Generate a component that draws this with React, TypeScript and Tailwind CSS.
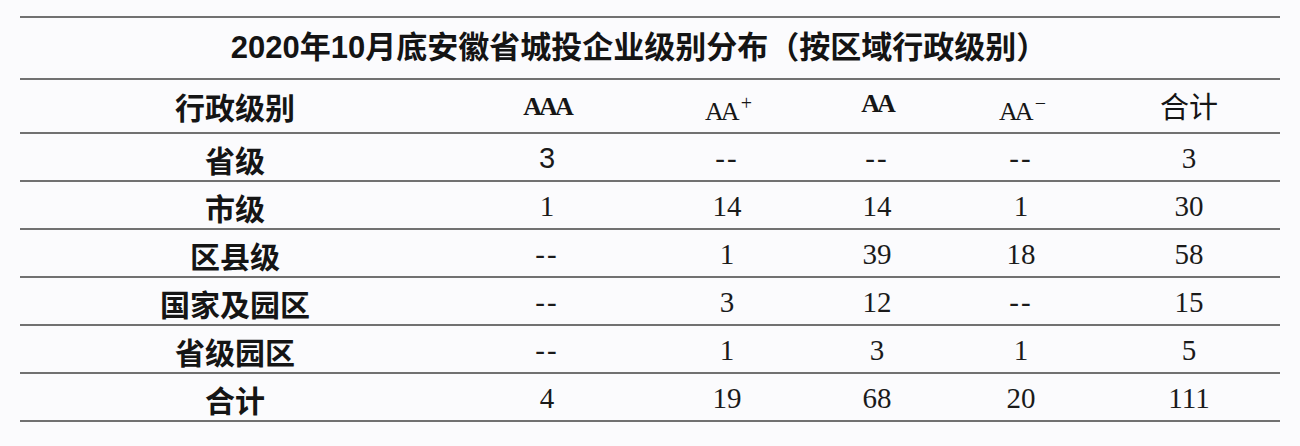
const cols = "grid grid-cols-[430px_194px_166px_134px_154px_182px] items-center";
const line = "border-b-2 border-[#717171]";

const cjk = "font-['Noto_Sans_CJK_SC',sans-serif]";
const serif = "font-['Liberation_Serif','Noto_Sans_CJK_SC',serif]";

const rows: string[][] = [
  ["省级", "3", "--", "--", "--", "3"],
  ["市级", "1", "14", "14", "1", "30"],
  ["区县级", "--", "1", "39", "18", "58"],
  ["国家及园区", "--", "3", "12", "--", "15"],
  ["省级园区", "--", "1", "3", "1", "5"],
  ["合计", "4", "19", "68", "20", "111"],
];

function Grade({ sup }: { sup: string }) {
  return (
    <span className={`${serif} text-[26px] tracking-[-3px] text-[#161616]`}>
      <span className="relative top-[5px]">AA</span>
      <span className="relative -top-[5px] ml-[4px] text-[20px]">{sup}</span>
    </span>
  );
}

export default function App() {
  return (
    <div className="min-h-screen bg-[#fbfbfd] px-5 pt-4">
      <div className="w-[1260px] border-t-2 border-[#717171]">
        <div className={`flex h-[62px] items-center justify-center pr-[22px] ${line}`}>
          <h1 className="font-['Liberation_Sans','Noto_Sans_CJK_SC',sans-serif] text-[31px] font-bold text-[#141414]">
            2020年10月底安徽省城投企业级别分布（按区域行政级别）
          </h1>
        </div>

        <div className={`${cols} h-[54px] ${line} text-center`}>
          <span className={`${cjk} text-[30px] font-bold text-[#151515]`}>行政级别</span>
          <span className={`${serif} text-[26px] font-bold tracking-[-3px] text-[#161616]`}>AAA</span>
          <Grade sup="+" />
          <span className={`${serif} relative -top-[3px] text-[26px] font-bold tracking-[-3px] text-[#161616]`}>AA</span>
          <Grade sup="−" />
          <span className={`${cjk} text-[29px] text-[#151515]`}>合计</span>
        </div>

        {rows.map((r, i) => (
          <div key={r[0] + i} className={`${cols} h-[48px] ${line} text-center`}>
            <span className={`${cjk} relative top-[2px] text-[30px] font-bold text-[#151515]`}>{r[0]}</span>
            {r.slice(1).map((v, j) => (
              <span
                key={j}
                className={`${i === 0 && j === 0 ? "font-['Liberation_Sans',sans-serif] font-light" : serif} relative top-[2px] text-[29px] ${
                  v === "--" ? "tracking-[2px]" : ""
                } text-[#1a1a1a]`}
              >
                {v}
              </span>
            ))}
          </div>
        ))}
      </div>
    </div>
  );
}
